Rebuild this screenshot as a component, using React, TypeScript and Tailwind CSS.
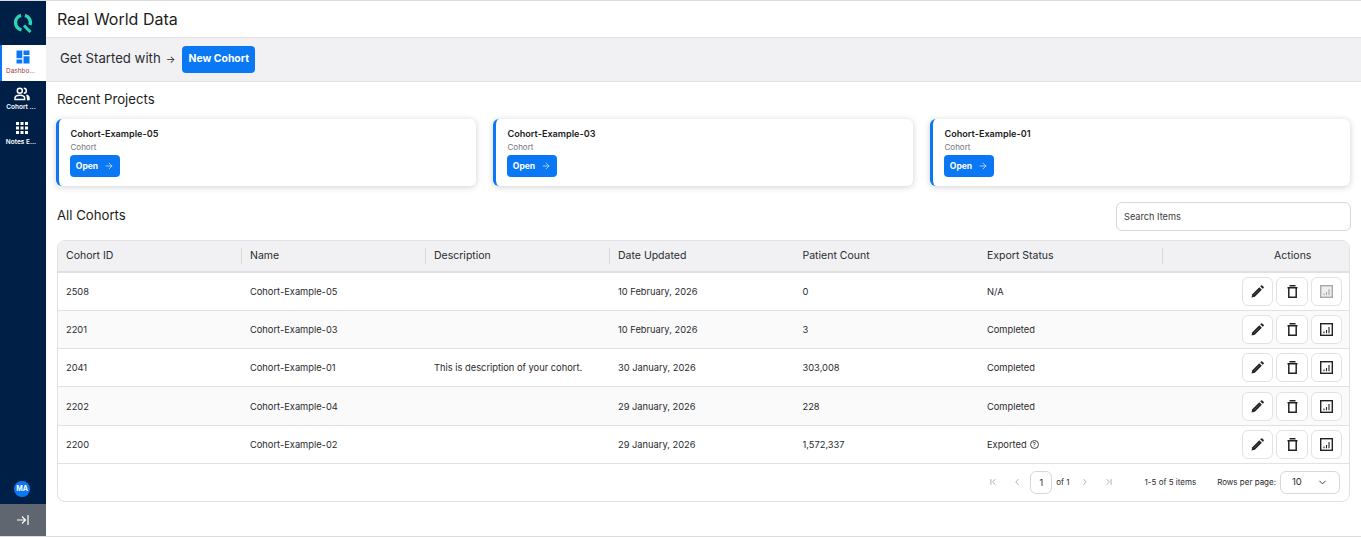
import { ArrowRight, ChevronDown, ChevronFirst, ChevronLast, ChevronLeft, ChevronRight } from 'lucide-react';

const recent = ['Cohort-Example-05', 'Cohort-Example-03', 'Cohort-Example-01'];

const rows = [
  { id: '2508', name: 'Cohort-Example-05', desc: '', date: '10 February, 2026', count: '0', status: 'N/A', disabled: true },
  { id: '2201', name: 'Cohort-Example-03', desc: '', date: '10 February, 2026', count: '3', status: 'Completed' },
  { id: '2041', name: 'Cohort-Example-01', desc: 'This is description of your cohort.', date: '30 January, 2026', count: '303,008', status: 'Completed' },
  { id: '2202', name: 'Cohort-Example-04', desc: '', date: '29 January, 2026', count: '228', status: 'Completed' },
  { id: '2200', name: 'Cohort-Example-02', desc: '', date: '29 January, 2026', count: '1,572,337', status: 'Exported', help: true },
];

function Logo() {
  return (
    <svg width="19" height="20" viewBox="0 0 19 20" fill="none">
      <path d="M7 2.400A7.400 7.400 0 0 0 7.500 16.800" stroke="#2dd4b4" strokeWidth="3.400" />
      <path d="M11 2.400A7.400 7.400 0 0 1 16 12" stroke="#2dd4b4" strokeWidth="3.400" />
      <path d="M10 12.500l6.500 6.500" stroke="#2dd4b4" strokeWidth="3" />
    </svg>
  );
}

function DashboardIcon() {
  return (
    <svg width="14" height="14" viewBox="0 0 14 14" fill="#0a78f5">
      <path d="M0.500 0.500h5.800v7.800H0.500zM7.500 0.500h6v4.600h-6zM7.500 6.300h6v7.200h-6zM0.500 9.500h5.800v4H0.500z" />
    </svg>
  );
}

function PeopleIcon() {
  return (
    <svg width="16" height="14" viewBox="0 0 16 14" fill="none" stroke="#fff" strokeWidth="1.500">
      <circle cx="5.800" cy="3.800" r="2.500" />
      <path d="M1 12.500v-1.300c0-1.700 2.100-3 4.800-3s4.800 1.300 4.800 3v1.300z" />
      <path d="M9.800 1.300a2.500 2.500 0 0 1 0 5" />
      <path d="M12.500 8.300c1.500.5 2.500 1.500 2.500 2.800v1.400h-2" fill="#fff" />
    </svg>
  );
}

function GridIcon() {
  return (
    <svg width="12" height="12" viewBox="0 0 12 12" fill="#fff">
      <rect x="0" y="0" width="3" height="3" />
      <rect x="4.500" y="0" width="3" height="3" />
      <rect x="9" y="0" width="3" height="3" />
      <rect x="0" y="4.500" width="3" height="3" />
      <rect x="4.500" y="4.500" width="3" height="3" />
      <rect x="9" y="4.500" width="3" height="3" />
      <rect x="0" y="9" width="3" height="3" />
      <rect x="4.500" y="9" width="3" height="3" />
      <rect x="9" y="9" width="3" height="3" />
    </svg>
  );
}

function PencilIcon() {
  return (
    <svg width="13" height="13" viewBox="0 0 13 13" fill="#222">
      <path d="M0.500 12.500l.8-3.300 7-7 2.500 2.500-7 7z" />
      <path d="M2.700 10.300l5.800-5.800" stroke="#777" strokeWidth="0.500" />
      <path d="M9.200 1.300l.9-.9a.8.8 0 0 1 1.100 0l1.400 1.400a.8.8 0 0 1 0 1.100l-.9.9z" />
    </svg>
  );
}

function TrashIcon() {
  return (
    <svg width="11" height="13" viewBox="0 0 11 13" fill="none" stroke="#222">
      <path d="M0.500 2.700h10" strokeWidth="1.500" />
      <path d="M2.500 0.800h6" strokeWidth="1.500" />
      <path d="M1.800 3v9.200h7.400V3" strokeWidth="1.500" />
    </svg>
  );
}

function ReportIcon({ disabled }: { disabled?: boolean }) {
  const color = disabled ? '#a8a8a8' : '#222';
  return (
    <svg width="13" height="13" viewBox="0 0 13 13" fill="none">
      <rect x="0.700" y="0.700" width="11.600" height="11.600" fill={disabled ? '#eeeeee' : 'none'} stroke={color} strokeWidth="1.400" />
      <path d="M4 8.500v1.800M6.500 7v3.300M9 4v6.300" stroke={color} strokeWidth="1.100" />
    </svg>
  );
}

function ActionButton({ children, className }: { children: React.ReactNode; className: string }) {
  return (
    <button className={`flex h-[29px] items-center justify-center rounded-md border border-[#e2e2e4] bg-white ${className}`}>
      {children}
    </button>
  );
}

const cols = 'grid grid-cols-[184px_184px_184px_184.500px_184.500px_184px_1fr] items-center';

export default function App() {
  return (
    <div className="flex h-[537px] w-[1361px] overflow-hidden border-y border-[#dcdcdc] bg-white font-['Inter',sans-serif] text-[#1d1d21]">
      <aside className="flex w-[46px] shrink-0 flex-col bg-[#001f47]">
        <div className="flex h-[44px] items-center justify-center">
          <Logo />
        </div>
        <div className="flex h-[36px] flex-col items-center border-l-2 border-[#0a78f5] bg-white pt-[5px] pr-[3px]">
          <DashboardIcon />
          <span className="mt-[3px] pr-[4px] text-center text-[6.500px] leading-[9px] text-[#a34040]">Dashbo...</span>
        </div>
        <div className="flex h-[36px] flex-col items-center pt-1.5 pr-[2px]">
          <PeopleIcon />
          <span className="mt-[2px] pr-[2px] text-center text-[6.500px] leading-[9px] font-semibold text-white">Cohort ...</span>
        </div>
        <div className="flex h-[36px] flex-col items-center pt-[5px] pr-[2px]">
          <GridIcon />
          <span className="mt-[4px] pr-[2px] text-center text-[6.500px] leading-[9px] font-semibold text-white">Notes E...</span>
        </div>
        <div className="mt-auto flex h-[40px] items-start justify-center pt-[17px] pr-[2px]">
          <span className="flex h-4 w-4 items-center justify-center rounded-full bg-[#0a78f5] text-[7px] font-bold text-white">MA</span>
        </div>
        <div className="flex h-[32px] items-center justify-center bg-[#5f6670]">
          <svg width="12" height="10" viewBox="0 0 12 10" fill="none" stroke="#fff" strokeWidth="1.100">
            <path d="M0 5h8M5 1.500L8.500 5 5 8.500" />
            <path d="M11 0v10" strokeWidth="1.600" stroke="#d8d8d8" />
          </svg>
        </div>
      </aside>

      <main className="flex min-w-0 flex-1 flex-col">
        <header className="flex h-[36px] items-center px-[11px] text-[16px] leading-none">Real World Data</header>
        <div className="flex h-[45px] items-center border-y border-[#e3e3e6] bg-[#f1f1f4] px-[14px]">
          <span className="pb-[2px] text-[13.200px] text-[#2a2a2e]">Get Started with</span>
          <span className="ml-[5px] text-[10px] text-[#2a2a2e]">→</span>
          <button className="ml-[7px] h-[27px] w-[73px] rounded bg-[#0a78f5] pb-[2px] text-[10.400px] font-bold text-white">New Cohort</button>
        </div>

        <section className="px-[10px]">
          <h2 className="mt-[9px] pl-[1px] text-[13.200px] leading-[16px]">Recent Projects</h2>
          <div className="mt-[12px] grid w-[1294px] grid-cols-3 gap-[17px]">
            {recent.map((name) => (
              <div key={name} className="h-[67px] rounded-md border-l-[3px] border-[#0a78f5] bg-white pt-[8px] pl-[11.500px] shadow-[0_1px_6px_rgba(30,40,70,0.22)]">
                <div className="text-[9.100px] leading-[13px] font-semibold">{name}</div>
                <div className="mt-[2px] text-[8px] leading-[11px] text-[#74747a]">Cohort</div>
                <button className="mt-[2px] -ml-[0.500px] flex h-[22px] w-[50px] items-center justify-center gap-[6px] rounded bg-[#0a78f5] text-[8.500px] font-bold text-white">
                  Open
                  <ArrowRight size={10} strokeWidth={1.500} />
                </button>
              </div>
            ))}
          </div>

          <div className="mt-[16px] flex h-[29px] w-[1295px] items-center justify-between">
            <h2 className="mb-[4px] pl-[1px] text-[13.200px] leading-[16px]">All Cohorts</h2>
            <input
              placeholder="Search Items"
              className="h-[29px] w-[235px] rounded-md border border-[#d8d8db] px-[7px] text-[9.200px] outline-none placeholder:text-[#3a3a3e]"
            />
          </div>

          <div className="mt-[8.500px] ml-[0.500px] w-[1293.500px] overflow-hidden rounded-lg border border-[#e2e2e4] text-[9.300px] text-[#2a2a2e]">
            <div className={`${cols} h-[32px] border-b-2 border-[#e0e0e3] bg-[#f1f1f4] text-[10.500px]`}>
              <div className="border-r border-[#d8d8db] pl-[8.500px] leading-[16px]">Cohort ID</div>
              <div className="border-r border-[#d8d8db] pl-[8.500px] leading-[16px]">Name</div>
              <div className="border-r border-[#d8d8db] pl-[8.500px] leading-[16px]">Description</div>
              <div className="pl-[8.500px] leading-[16px]">Date Updated</div>
              <div className="pl-[8.500px] leading-[16px]">Patient Count</div>
              <div className="border-r border-[#d8d8db] pl-[8.500px] leading-[16px]">Export Status</div>
              <div className="pl-[74px] text-center leading-[16px]">Actions</div>
            </div>
            {rows.map((r, i) => (
              <div key={r.id} className={`${cols} h-[38.300px] border-b border-[#e2e2e4] ${i % 2 === 1 ? 'bg-[#fafafa]' : 'bg-white'}`}>
                <div className="pt-[1px] pl-[8.500px]">{r.id}</div>
                <div className="pt-[1px] pl-[8.500px]">{r.name}</div>
                <div className="pt-[1px] pl-[8.500px]">{r.desc}</div>
                <div className="pt-[1px] pl-[8.500px]">{r.date}</div>
                <div className="pt-[1px] pl-[8.500px]">{r.count}</div>
                <div className="flex items-center gap-[3px] pt-[1px] pl-[8.500px]">
                  {r.status}
                  {r.help && (
                    <span className="flex h-[9px] w-[9px] items-center justify-center rounded-full border border-[#444] text-[6.500px] leading-none">?</span>
                  )}
                </div>
                <div className="flex items-center justify-end gap-[3px] pr-[7px]">
                  <ActionButton className="w-[31px]"><PencilIcon /></ActionButton>
                  <ActionButton className="w-[32px]"><TrashIcon /></ActionButton>
                  <ActionButton className="w-[31px]"><ReportIcon disabled={r.disabled} /></ActionButton>
                </div>
              </div>
            ))}
            <div className="flex h-[37px] items-center justify-end pr-[9px] text-[8px]">
              <ChevronFirst size={10} className="text-[#a0a0a4]" />
              <ChevronLeft size={10} className="ml-[14px] text-[#a0a0a4]" />
              <span className="ml-[8px] flex h-[23px] w-[22px] items-center justify-center rounded-md border border-[#d8d8db] text-[9px]">1</span>
              <span className="ml-[4px]">of 1</span>
              <ChevronRight size={10} className="ml-[10px] text-[#a0a0a4]" />
              <ChevronLast size={10} className="ml-[14px] text-[#a0a0a4]" />
              <span className="ml-[31px]">1-5 of 5 items</span>
              <span className="ml-[21px]">Rows per page:</span>
              <span className="ml-[4px] flex h-[23px] w-[60px] items-center justify-between rounded-md border border-[#d8d8db] px-[11px] text-[9.500px]">
                10
                <ChevronDown size={11} />
              </span>
            </div>
          </div>
        </section>
      </main>
    </div>
  );
}
